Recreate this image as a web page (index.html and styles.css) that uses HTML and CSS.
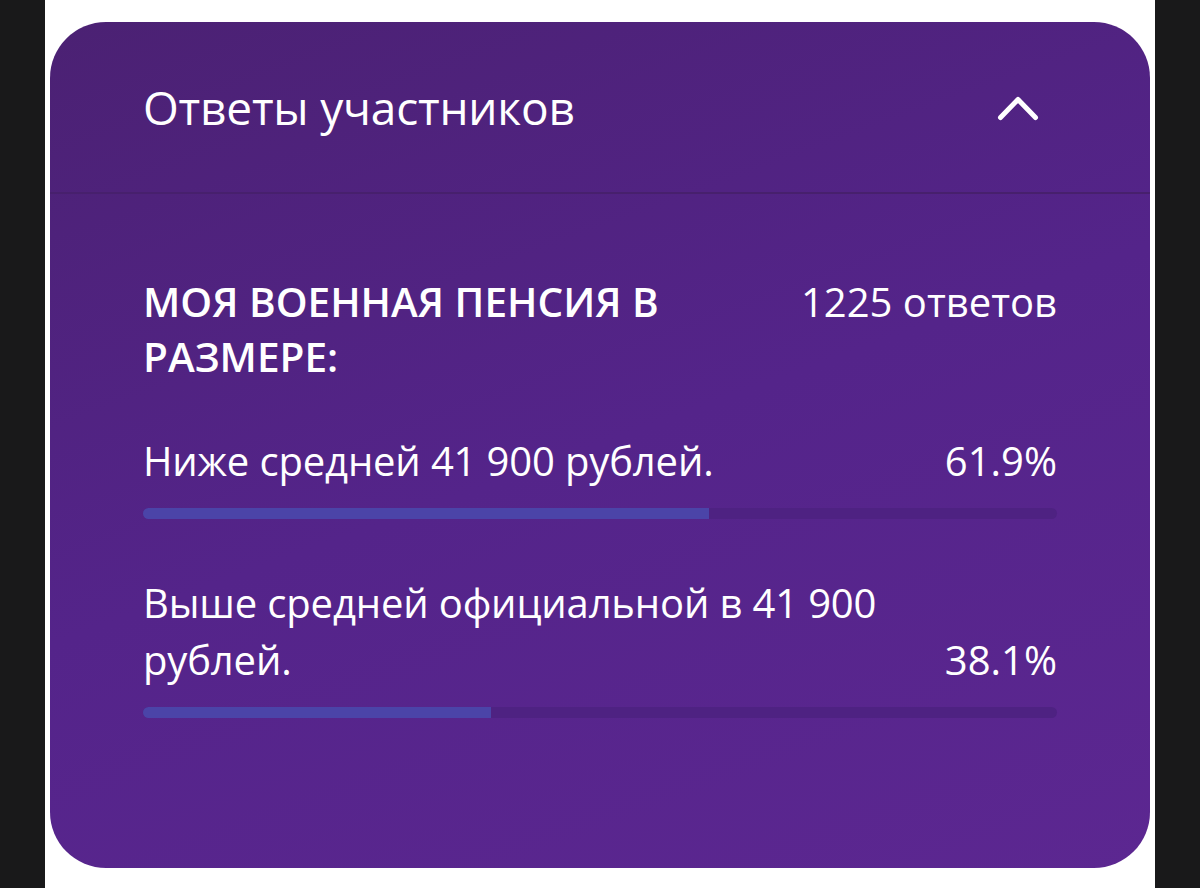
FILE: index.html
```html
<!DOCTYPE html>
<html lang="ru">
<head>
    <meta charset="UTF-8">
    <meta name="viewport" content="width=device-width, initial-scale=1.0">
    <title>Ответы участников</title>
    <link rel="stylesheet" href="styles.css">
</head>
<body>
    <div class="page">
        <div class="poll-card">
            <div class="poll-header">
                <h1>Ответы участников</h1>
                <svg class="chevron" width="44" height="28" viewBox="0 0 44 28">
                    <path d="M4.5 24.5 L22 6.5 L39.5 24.5" fill="none" stroke="#fff" stroke-width="5" stroke-linecap="round" stroke-linejoin="round"/>
                </svg>
            </div>

            <div class="poll-body">
                <div class="question">
                    <h2>МОЯ ВОЕННАЯ ПЕНСИЯ В РАЗМЕРЕ:</h2>
                    <span class="count">1225 ответов</span>
                </div>

                <div class="option">
                    <div class="option-row">
                        <span class="option-text">Ниже средней 41 900 рублей.</span>
                        <span class="percent">61.9%</span>
                    </div>
                    <div class="bar"><div class="bar-fill" style="width: 61.9%"></div></div>
                </div>

                <div class="option">
                    <div class="option-row">
                        <span class="option-text">Выше средней официальной в 41 900 рублей.</span>
                        <span class="percent">38.1%</span>
                    </div>
                    <div class="bar"><div class="bar-fill" style="width: 38.1%"></div></div>
                </div>
            </div>
        </div>
    </div>
</body>
</html>
```

FILE: styles.css
```css
body {
    margin: 0;
    padding: 0;
    background-color: #19191a;
    font-family: "Open Sans", "Noto Sans", sans-serif;
    color: #fff;
}
.page {
    width: 1100px;
    min-height: 888px;
    margin-left: 45px;
    padding: 22px 5px 0;
    background-color: #fff;
    box-sizing: content-box;
}
.poll-card {
    height: 846px;
    border-radius: 56px;
    background: linear-gradient(160deg, #4b2173 0%, #54248a 50%, #5c2791 100%);
    overflow: hidden;
}
.poll-header {
    height: 170px;
    padding: 0 110px 0 93px;
    display: flex;
    align-items: center;
    justify-content: space-between;
    border-bottom: 2px solid #47206d;
}
.poll-header h1 {
    margin: 0;
    font-size: 46px;
    font-weight: 500;
    letter-spacing: -0.2px;
}
.chevron {
    display: block;
}
.poll-body {
    padding: 80px 93px 0 93px;
}
.question {
    display: flex;
    justify-content: space-between;
    align-items: flex-start;
    margin-bottom: 48px;
}
.question h2 {
    margin: 0;
    width: 600px;
    font-size: 40.5px;
    line-height: 55px;
    font-weight: 600;
}
.count {
    font-size: 40px;
    line-height: 55px;
}
.option {
    margin-bottom: 55px;
}
.option-row {
    display: flex;
    justify-content: space-between;
    align-items: flex-end;
    font-size: 40px;
    line-height: 57px;
}
.option-text {
    max-width: 760px;
    letter-spacing: -0.15px;
}
.bar {
    margin-top: 19px;
    height: 11px;
    border-radius: 6px;
    background-color: #4e2282;
    overflow: hidden;
}
.bar-fill {
    height: 100%;
    background-color: #4b44a8;
}
```
